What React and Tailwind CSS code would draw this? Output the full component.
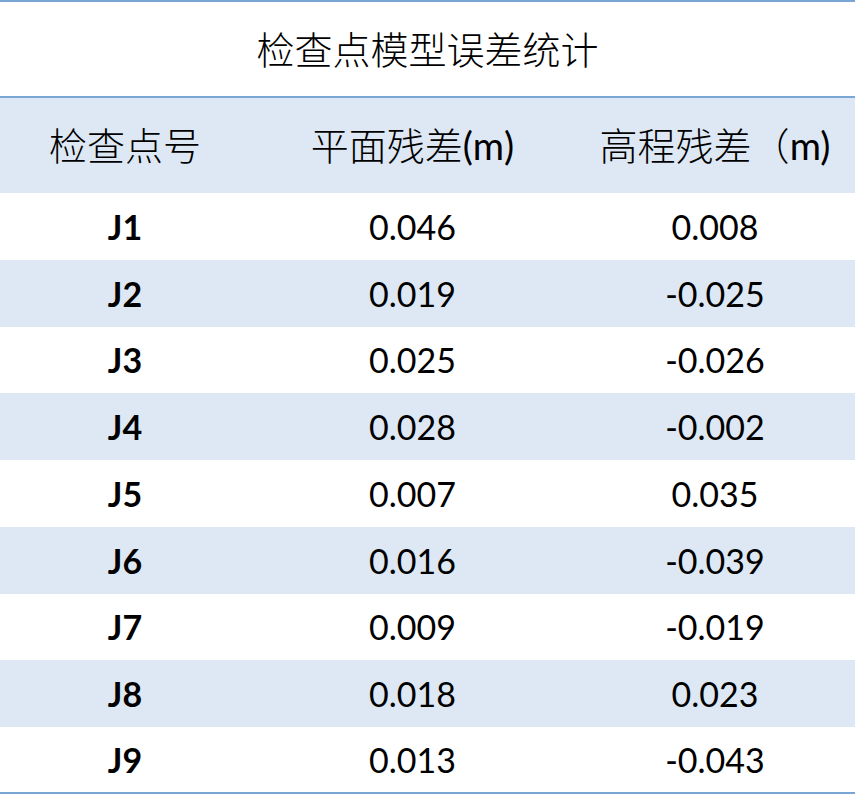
import React from "react";

const rows = [
  ["J1", "0.046", "0.008"],
  ["J2", "0.019", "-0.025"],
  ["J3", "0.025", "-0.026"],
  ["J4", "0.028", "-0.002"],
  ["J5", "0.007", "0.035"],
  ["J6", "0.016", "-0.039"],
  ["J7", "0.009", "-0.019"],
  ["J8", "0.018", "0.023"],
  ["J9", "0.013", "-0.043"],
];

const font = { fontFamily: "Lato, 'Noto Sans CJK SC', sans-serif" };

export default function App() {
  return (
    <div className="w-[855px] h-[807px] bg-white text-black" style={font}>
      <div className="h-[2px] bg-[#7aa6d6]" />
      <div className="h-[94px] flex items-center justify-center text-[38px] font-light">
        检查点模型误差统计
      </div>
      <div className="h-[2px] bg-[#7aa6d6]" />
      <div className="h-[95px] bg-[#dde8f4] grid grid-cols-[250px_325px_280px] items-center text-[38px]">
        <div className="text-center font-light">检查点号</div>
        <div className="text-center">
          <span className="font-light">平面残差</span>(m)
        </div>
        <div className="text-center">
          <span className="font-light">高程残差（</span>m)
        </div>
      </div>
      {rows.map((r, i) => (
        <div
          key={r[0]}
          className={`grid grid-cols-[250px_325px_280px] items-center text-[34px] ${
            i === rows.length - 1 ? "h-[65px]" : "h-[66.75px]"
          } ${i % 2 === 1 ? "bg-[#dde8f4]" : "bg-white"}`}
        >
          <div className="text-center font-bold">{r[0]}</div>
          <div className="text-center">{r[1]}</div>
          <div className="text-center">{r[2]}</div>
        </div>
      ))}
      <div className="h-[2px] bg-[#7aa6d6]" />
    </div>
  );
}
